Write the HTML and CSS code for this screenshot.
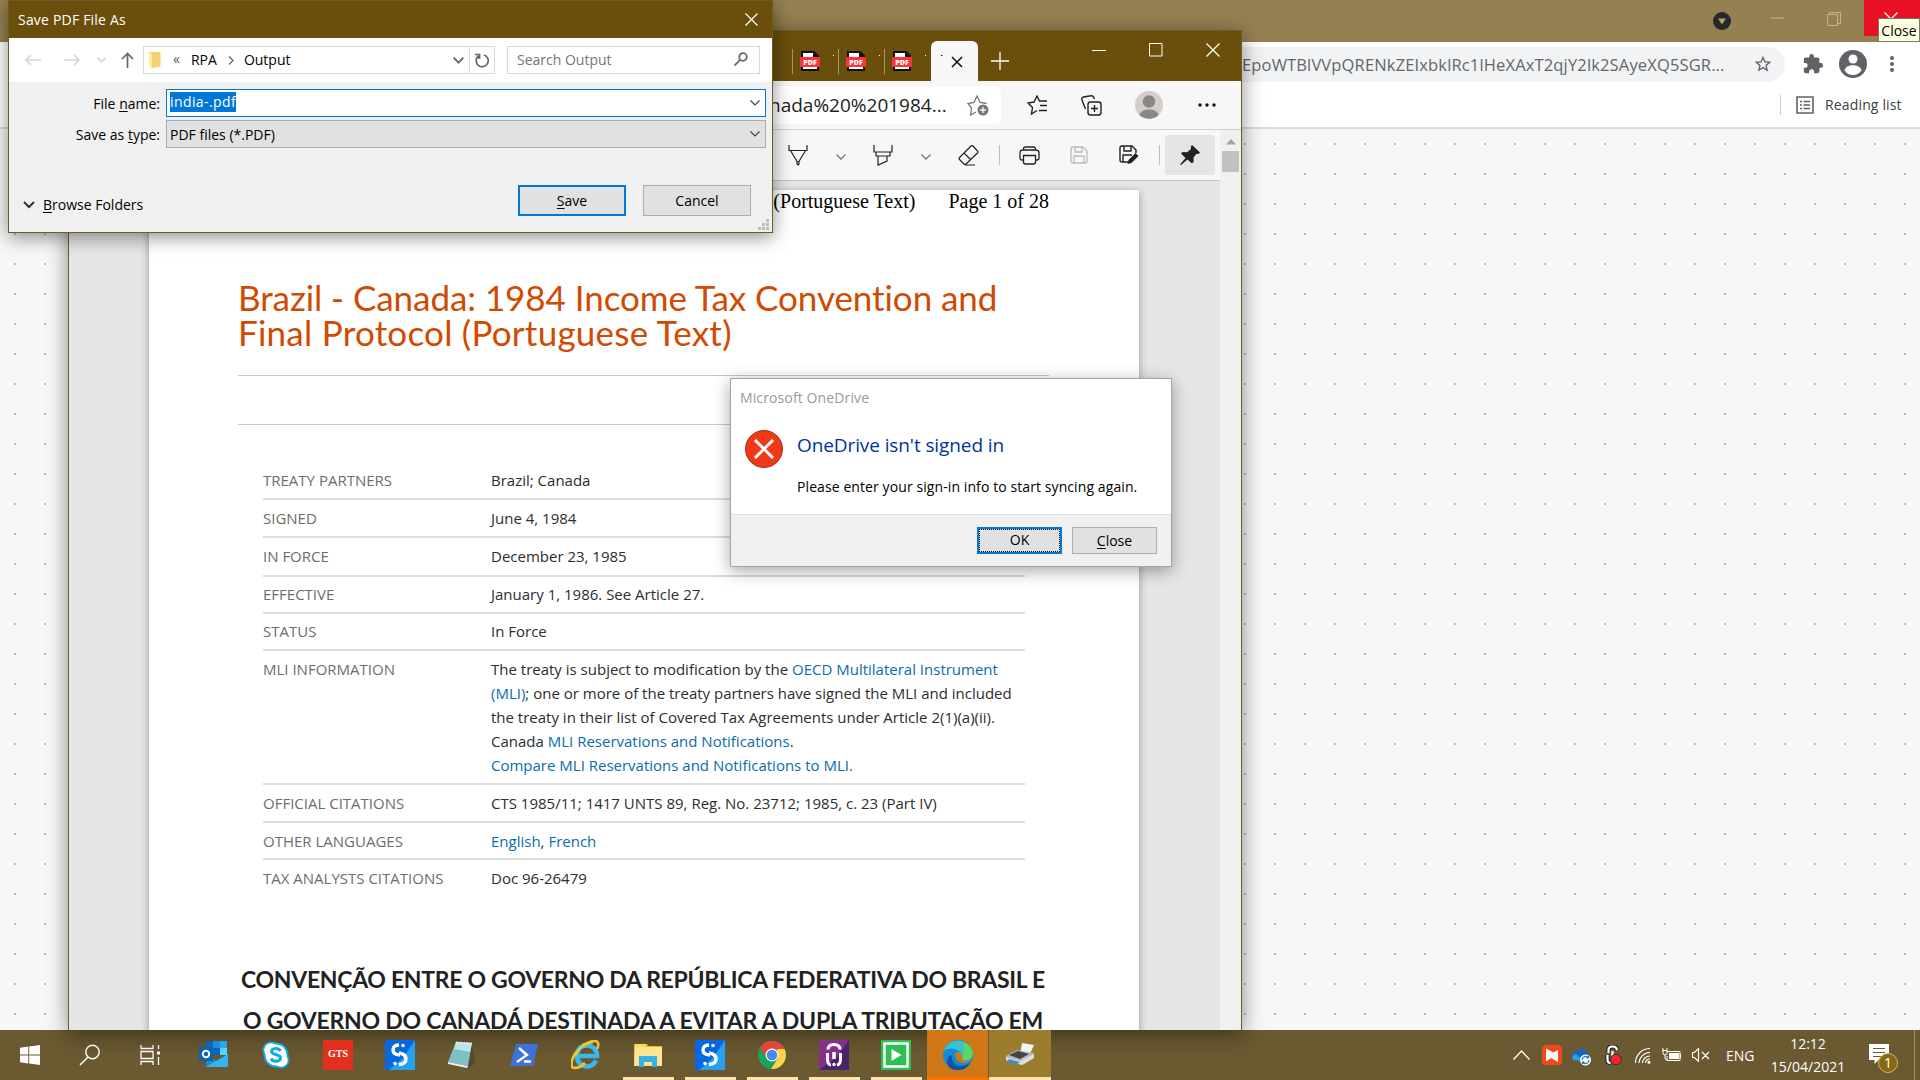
FILE: index.html
```html
<!DOCTYPE html>
<html lang="en">
<head>
<meta charset="utf-8">
<title>Desktop</title>
<link rel="stylesheet" href="styles.css">
</head>
<body>
<div class="desktop">

<section class="chrome">
  <div class="chrome-title">
    <svg class="chrome-drop" width="18" height="18" viewBox="0 0 18 18"><circle cx="9" cy="9" r="9" fill="#26272a"/><path d="M5 6.500h8L9 12.500z" fill="#b39d6b"/></svg>
    <svg class="chrome-min" width="13" height="2"><path d="M0 1h13" stroke="#c2b38f"/></svg>
    <svg class="chrome-max" width="14" height="14" viewBox="0 0 14 14" fill="none" stroke="#c2b38f"><path d="M.5 2.500h10v11H.5zM2.500 2.500v-2h11v11h-3"/></svg>
    <div class="chrome-close"><svg width="14" height="14" viewBox="0 0 14 14" stroke="#fff" stroke-width="1.200"><path d="M.5.5l13 13M13.500.5l-13 13"/></svg></div>
  </div>
  <div class="chrome-bar">
    <div class="omni"><span class="omni-text">EpoWTBlVVpQRENkZEIxbklRc1lHeXAxT2qjY2lk2SAyeXQ5SGR...</span>
      <svg width="20" height="20" viewBox="0 0 24 24" fill="#5f6368"><path d="M22 9.240l-7.190-.62L12 2 9.190 8.630 2 9.240l5.460 4.730L5.820 21 12 17.270 18.180 21l-1.630-7.030L22 9.240zM12 15.400l-3.760 2.270 1-4.280-3.320-2.880 4.380-.38L12 6.100l1.710 4.040 4.380.38-3.320 2.880 1 4.280L12 15.400z"/></svg>
    </div>
    <svg class="ext" width="22" height="22" viewBox="0 0 24 24" fill="#5f6368"><path d="M20.500 11H19V7c0-1.100-.9-2-2-2h-4V3.500a2.500 2.500 0 0 0-5 0V5H4c-1.100 0-2 .9-2 2v3.800h1.500a2.700 2.700 0 0 1 0 5.400H2V20c0 1.100.9 2 2 2h3.800v-1.500a2.700 2.700 0 0 1 5.400 0V22H17c1.100 0 2-.9 2-2v-4h1.500a2.500 2.500 0 0 0 0-5z"/></svg>
    <svg class="person" width="28" height="28" viewBox="0 0 28 28"><circle cx="14" cy="14" r="14" fill="#5f6368"/><circle cx="14" cy="9" r="4.500" fill="#fff"/><path d="M5.500 20.500c1-7 16-7 17 0-4.500 6-12.500 6-17 0z" fill="#fff"/></svg>
    <svg class="kebab" width="6" height="18" viewBox="0 0 6 18" fill="#5f6368"><circle cx="3" cy="3" r="2"/><circle cx="3" cy="9" r="2"/><circle cx="3" cy="15" r="2"/></svg>
  </div>
  <div class="chrome-marks">
    <span class="vline"></span>
    <svg width="18" height="18" viewBox="0 0 18 18" fill="none" stroke="#5f6368" stroke-width="1.600"><path d="M1 1h16v16H1zM4 5.500h2M4 9h2M4 12.500h2M7.500 5.500H14M7.500 9H14M7.500 12.500H14"/></svg>
    <span class="reading">Reading list</span>
  </div>
  <div class="dots"></div>
</section>

<section class="edge">
  <header class="edge-title">
    <div class="tab"><i></i><svg width="20" height="20" viewBox="0 0 20 20"><path d="M2 1h12l4 4v14H2z" fill="#fff" stroke="#111" stroke-width="2"/><path d="M13 1v5h5" fill="#111"/><rect y="6" width="20" height="10" rx="1" fill="#f7373b"/><text x="10" y="13.600" class="pdf">PDF</text></svg></div>
    <div class="tab"><i></i><svg width="20" height="20" viewBox="0 0 20 20"><path d="M2 1h12l4 4v14H2z" fill="#fff" stroke="#111" stroke-width="2"/><path d="M13 1v5h5" fill="#111"/><rect y="6" width="20" height="10" rx="1" fill="#f7373b"/><text x="10" y="13.600" class="pdf">PDF</text></svg></div>
    <div class="tab"><i></i><svg width="20" height="20" viewBox="0 0 20 20"><path d="M2 1h12l4 4v14H2z" fill="#fff" stroke="#111" stroke-width="2"/><path d="M13 1v5h5" fill="#111"/><rect y="6" width="20" height="10" rx="1" fill="#f7373b"/><text x="10" y="13.600" class="pdf">PDF</text></svg></div>
    <div class="tab-active"><svg width="22" height="14" viewBox="0 0 22 14" stroke="#111" stroke-width="1.500"><path d="M11 3l10 10M21 3L11 13"/><path d="M0 1.500h1.500" stroke-width="1"/></svg></div>
    <svg class="plus" width="18" height="18" viewBox="0 0 18 18" stroke="#fff" stroke-width="1.300"><path d="M9 0v18M0 9h18"/></svg>
    <svg class="wmin" width="14" height="14" viewBox="0 0 14 14" stroke="#fff"><path d="M0 7.500h14"/></svg>
    <svg class="wmax" width="14" height="14" viewBox="0 0 14 14" stroke="#fff" fill="none"><path d="M.5.500h12.500v12.500H.5z"/></svg>
    <svg class="wclose" width="14" height="14" viewBox="0 0 14 14" stroke="#fff" stroke-width="1.200"><path d="M.5.500l13 13M13.500.500l-13 13"/></svg>
  </header>
  <div class="edge-addr">
    <div class="url"><span>nada%20%201984...</span>
      <svg width="22" height="21" viewBox="0 0 22 21" fill="none" stroke="#777" stroke-width="1.300"><path d="M9 17l-5.500 3 1-7L1 8.500l6-1L10 1l3 6.500 6.500 1"/><circle cx="16" cy="15" r="5.500" fill="#777" stroke="none"/><path d="M16 12v6M13 15h6" stroke="#fff"/></svg>
    </div>
    <svg class="fav" width="21" height="20" viewBox="0 0 21 20" fill="none" stroke="#222" stroke-width="1.400"><path d="M10 15.500L4.500 19l1-6.500L1 8l6-1 3-6 2.500 5H20M13 10.500h7M12 15.500h8"/></svg>
    <svg class="coll" width="21" height="21" viewBox="0 0 21 21" fill="none" stroke="#222" stroke-width="1.400"><rect x="7" y="7" width="13" height="13" rx="2.500"/><path d="M13.500 10v7M10 13.500h7M4.500 14L1 5c-.5-1.500 0-2.500 1.500-3L10 .8c1.500-.3 2.500.5 3 2l.3 1.200"/></svg>
    <svg class="face" width="28" height="28" viewBox="0 0 28 28"><circle cx="14" cy="14" r="14" fill="#d3d0cc"/><circle cx="14" cy="10.500" r="6.200" fill="#8b8783"/><path d="M4.500 24c1-7.500 18-7.500 19 0a14 14 0 0 1-19 0z" fill="#8b8783"/></svg>
    <svg class="more" width="18" height="4" viewBox="0 0 18 4" fill="#111"><circle cx="2" cy="2" r="1.700"/><circle cx="9" cy="2" r="1.700"/><circle cx="16" cy="2" r="1.700"/></svg>
  </div>
  <div class="edge-body">
    <div class="viewer">
      <div class="pdfbar">
        <svg class="i-pen" width="20" height="21" viewBox="0 0 20 21" fill="none" stroke="#222" stroke-width="1.200"><path d="M1 0v5.500h18V0M2.500 5.500l6.500 11h2l6.500-11M9 16v3l1 1 1-1v-3"/></svg>
        <svg class="i-c1" width="10" height="6" viewBox="0 0 10 6" fill="none" stroke="#777" stroke-width="1.300"><path d="M.5.500L5 5 9.500.500"/></svg>
        <svg class="i-hl" width="20" height="21" viewBox="0 0 20 21" fill="none" stroke="#222" stroke-width="1.200"><path d="M1 0v7h18V0M3 7v4h14V7M5 11v9l9-4v-5"/></svg>
        <svg class="i-c2" width="10" height="6" viewBox="0 0 10 6" fill="none" stroke="#777" stroke-width="1.300"><path d="M.5.500L5 5 9.500.500"/></svg>
        <svg class="i-er" width="21" height="21" viewBox="0 0 21 21" fill="none" stroke="#222" stroke-width="1.200"><path d="M13 1L1.500 12.500q-1 1 0 2L6 19q1 1 2 0L19.500 8q1-1 0-2L15 1q-1-1-2 0zM6 8l7 7M7 20h10"/></svg>
        <i class="sep s1"></i>
        <svg class="i-pr" width="21" height="19" viewBox="0 0 21 19" fill="none" stroke="#222" stroke-width="1.300"><path d="M4.500 4V3q0-2 2-2h8q2 0 2 2v1M4.500 14H3q-2 0-2-2V7q0-3 3-3h13q3 0 3 3v5q0 2-2 2h-1.500M4.500 9.500h12V16q0 2-2 2h-8q-2 0-2-2z"/></svg>
        <svg class="i-sv" width="18" height="18" viewBox="0 0 18 18" fill="none" stroke="#bbb" stroke-width="1.300"><path d="M3 1h10l4 4v10q0 2-2 2H3q-2 0-2-2V3q0-2 2-2zM5 1v5h7V1M4 17v-7h10v7"/></svg>
        <svg class="i-sa" width="20" height="20" viewBox="0 0 20 20" fill="none" stroke="#222" stroke-width="1.400"><path d="M9 17H3q-2 0-2-2V3q0-2 2-2h10l4 4v3M5 1v5h7V1M4 17v-7h9"/><path d="M8.500 19l1-4 7-7 3 3-7 7z" fill="#222" stroke="none"/></svg>
        <i class="sep s2"></i>
        <div class="pin"><svg width="20" height="20" viewBox="0 0 20 20" fill="#222"><path d="M12 0l8 7.500-1.500 1.500-2-.2-3 3.700.2 4-1.700 2-4.500-4L1 20l-1-.5 5.500-6.500L1 8.500 2.500 7l4.500.2L11 4l-.2-2.500z"/></svg></div>
      </div>
      <div class="canvas">
        <article class="page">
          <div class="page-head"><span>(Portuguese Text)</span><span>Page 1 of 28</span></div>
          <h1><span class="h1a">Brazil - Canada: 1984 Income Tax Convention and</span><br><span class="h1b">Final Protocol (Portuguese Text)</span></h1>
          <div class="band"></div>
          <dl class="facts">
            <div><dt>TREATY PARTNERS</dt><dd>Brazil; Canada</dd></div>
            <div><dt>SIGNED</dt><dd>June 4, 1984</dd></div>
            <div class="tall"><dt>IN FORCE</dt><dd>December 23, 1985</dd></div>
            <div class="up"><dt>EFFECTIVE</dt><dd>January 1, 1986. See Article 27.</dd></div>
            <div class="up"><dt>STATUS</dt><dd>In Force</dd></div>
            <div><dt>MLI INFORMATION</dt><dd>The treaty is subject to modification by the <a>OECD Multilateral Instrument</a><br><a>(MLI)</a>; one or more of the treaty partners have signed the MLI and included<br>the treaty in their list of Covered Tax Agreements under Article 2(1)(a)(ii).<br>Canada <a>MLI Reservations and Notifications</a>.<br><a>Compare MLI Reservations and Notifications to MLI.</a></dd></div>
            <div><dt>OFFICIAL CITATIONS</dt><dd>CTS 1985/11; 1417 UNTS 89, Reg. No. 23712; 1985, c. 23 (Part IV)</dd></div>
            <div class="short"><dt>OTHER LANGUAGES</dt><dd><a>English</a>, <a>French</a></dd></div>
            <div><dt>TAX ANALYSTS CITATIONS</dt><dd>Doc 96-26479</dd></div>
          </dl>
          <h2><span class="h2a">CONVENÇÃO ENTRE O GOVERNO DA REPÚBLICA FEDERATIVA DO BRASIL E</span><br><span class="h2b">O GOVERNO DO CANADÁ DESTINADA A EVITAR A DUPLA TRIBUTAÇÃO EM</span></h2>
        </article>
      </div>
    </div>
    <div class="scroll"><svg width="10" height="6" viewBox="0 0 10 6"><path d="M0 5.500L5 0l5 5.500z" fill="#a3a3a3"/></svg><div class="thumb"></div></div>
  </div>
</section>

<section class="save">
  <header><span>Save PDF File As</span><svg width="13" height="13" viewBox="0 0 13 13" stroke="#fff" stroke-width="1.200"><path d="M.5.500l12 12M12.500.500l-12 12"/></svg></header>
  <div class="nav">
    <svg class="n-b" width="16" height="12" viewBox="0 0 16 12" fill="none" stroke="#d5d5d5" stroke-width="1.600"><path d="M16 6H1M6 1L1 6l5 5"/></svg>
    <svg class="n-f" width="16" height="12" viewBox="0 0 16 12" fill="none" stroke="#d5d5d5" stroke-width="1.600"><path d="M0 6h15M10 1l5 5-5 5"/></svg>
    <svg class="n-d" width="9" height="6" viewBox="0 0 9 6" fill="none" stroke="#d5d5d5" stroke-width="1.600"><path d="M.5.500l4 4.500 4-4.500"/></svg>
    <svg class="n-u" width="13" height="16" viewBox="0 0 13 16" fill="none" stroke="#666" stroke-width="1.700"><path d="M6.500 16V1.500M1 7l5.500-5.500L12 7"/></svg>
    <div class="crumbs">
      <svg class="fold" width="12" height="18" viewBox="0 0 12 18"><path d="M0 1h11.500v14.500L4 17 0 15z" fill="#f6d173"/><path d="M0 1l3 2v15l-3-2z" fill="#ffe9a8"/></svg>
      <span class="c1">«</span><span class="c2">RPA</span>
      <svg width="6" height="9" viewBox="0 0 6 9" fill="none" stroke="#666" stroke-width="1.300"><path d="M1 .5l4 4-4 4"/></svg>
      <span class="c3">Output</span>
      <svg class="cdown" width="11" height="7" viewBox="0 0 11 7" fill="none" stroke="#666" stroke-width="1.800"><path d="M.7.700l4.800 5 4.800-5"/></svg>
      <div class="refresh"><svg width="14" height="15" viewBox="0 0 14 15" fill="none" stroke="#666" stroke-width="1.700"><path d="M9 2A6 6 0 1 1 3.500 3M0 1.500h4.500V6"/></svg></div>
    </div>
    <div class="search"><span>Search Output</span><svg width="14" height="14" viewBox="0 0 14 14" fill="none" stroke="#666" stroke-width="1.800"><circle cx="9" cy="5" r="3.800"/><path d="M6.300 7.700L.5 13.500"/></svg></div>
  </div>
  <div class="form">
    <label>File <u>n</u>ame:</label>
    <div class="input"><span>india-.pdf</span><svg width="10" height="6" viewBox="0 0 10 6" fill="none" stroke="#444" stroke-width="1.200"><path d="M.5.500L5 5 9.500.500"/></svg></div>
    <label class="lt">Save as <u>t</u>ype:</label>
    <div class="select"><span>PDF files (*.PDF)</span><svg width="10" height="6" viewBox="0 0 10 6" fill="none" stroke="#444" stroke-width="1.200"><path d="M.5.500L5 5 9.500.500"/></svg></div>
  </div>
  <footer>
    <svg class="bdown" width="12" height="8" viewBox="0 0 12 8" fill="none" stroke="#333" stroke-width="2"><path d="M1 1l5 5 5-5"/></svg>
    <span class="browse"><u>B</u>rowse Folders</span>
    <div class="btn primary"><span><u>S</u>ave</span></div>
    <div class="btn">Cancel</div>
  </footer>
  <svg class="grip" width="11" height="11" viewBox="0 0 11 11" fill="#bdbdbd"><path d="M8 0h3v3H8zM8 4h3v3H8zM4 4h3v3H4zM0 8h3v3H0zM4 8h3v3H4zM8 8h3v3H8z"/></svg>
</section>

<section class="onedrive">
  <div class="od-title">Microsoft OneDrive</div>
  <div class="od-main">
    <svg width="38" height="38" viewBox="0 0 38 38"><circle cx="19" cy="19" r="18.500" fill="#f03a17" stroke="#a82a16"/><path d="M10 10l18 18M28 10L10 28" stroke="#fff" stroke-width="3"/></svg>
    <div class="od-text"><div class="od-h">OneDrive isn't signed in</div><div class="od-p">Please enter your sign-in info to start syncing again.</div></div>
  </div>
  <div class="od-foot"><div class="btn ok"><span>OK</span></div><div class="btn cl"><span><u>C</u>lose</span></div></div>
</section>

<div class="tooltip">Close</div>

<nav class="taskbar">
  <div class="sys"><svg width="20" height="20" viewBox="0 0 20 20" fill="#fff"><path d="M0 2.800l8.300-1.200v8H0zM9.200 1.400L20 0v9.600H9.200zM0 10.500h8.300v8L0 17.300zM9.200 10.500H20V20L9.200 18.600z"/></svg></div>
  <div class="sys"><svg width="22" height="22" viewBox="0 0 22 22" fill="none" stroke="#fff" stroke-width="1.400"><circle cx="13.500" cy="8" r="6.700"/><path d="M9 13l-8 8"/></svg></div>
  <div class="sys"><svg width="20" height="20" viewBox="0 0 20 20" fill="none" stroke="#fff" stroke-width="1.300"><path d="M1 0v3.500h12V0M1 20v-3.500h12V20M1 6.500h12v7H1zM18.500 0v4M18.500 12v8"/><path d="M17 6.500h3v3h-3z" fill="#fff" stroke="none"/></svg></div>
  <div class="apps">
    <div class="app"><svg width="30" height="30" viewBox="0 0 30 30"><path d="M7 1h21v14H7z" fill="#0f65b5"/><path d="M14 1h7v7h-7z" fill="#1490df"/><path d="M21 1h7v7h-7z" fill="#28a8ea"/><path d="M21 8h7v7h-7z" fill="#50d9ff"/><path d="M7 27V15l11 6 11-7v12l-1 1z" fill="#1b8ad8"/><path d="M7 27l22-13v12l-1 1z" fill="#35b4f2"/><rect y="7" width="14" height="14" rx="1" fill="#0c61b5"/><circle cx="7" cy="14" r="3.200" fill="none" stroke="#fff" stroke-width="2"/></svg></div>
    <div class="app"><svg width="28" height="28" viewBox="0 0 28 28"><circle cx="9" cy="9" r="8.500" fill="#13a9e9"/><circle cx="19" cy="19" r="8.500" fill="#13a9e9"/><circle cx="14" cy="14" r="12.500" fill="#13a9e9"/><circle cx="9" cy="9" r="6.800" fill="#fff"/><circle cx="19" cy="19" r="6.800" fill="#fff"/><circle cx="14" cy="14" r="10.500" fill="#fff"/><path d="M18.500 10q-2-3-5-2.500Q9.500 8 9.500 10.500c0 3.500 9 2.500 9 6.500 0 3.800-7.500 4.500-9.500.5" fill="none" stroke="#13a9e9" stroke-width="3"/></svg></div>
    <div class="app"><div class="gts">GTS</div></div>
    <div class="app"><svg width="30" height="30" viewBox="0 0 30 30"><path d="M0 0h30v30H0z" fill="#0667e0"/><path d="M30 0v30H4l14-12z" fill="#24a1ef"/><path d="M14 5q-6 0-6 5 0 4.500 7 5" fill="none" stroke="#fff" stroke-width="3.400"/><path d="M14 13q7 1 7 6 0 5-7 5.500" fill="none" stroke="#fff" stroke-width="3.400"/><circle cx="18" cy="5.500" r="1.800" fill="#fff"/><circle cx="10" cy="23.500" r="1.800" fill="#fff"/></svg></div>
    <div class="app"><svg width="30" height="30" viewBox="0 0 30 30"><path d="M25 3l3 20-4 4-3-1z" fill="#57492d"/><path d="M9 2l16 1-4 23L1 22z" fill="#7fbfc6"/><path d="M9 2l16 1-2 9-16-3z" fill="#bce5e7"/><path d="M1 22l20 4-1 2-19-4z" fill="#e9eeee"/><path d="M9 2.500l16 1" stroke="#e8e8e8" stroke-width="2" stroke-dasharray="1.500 1"/></svg></div>
    <div class="app"><svg width="28" height="22" viewBox="0 0 28 22"><path d="M6 0h22l-5 22H0z" fill="#3f72d9"/><path d="M9 4l8 7-10 7M14 17.500h7" fill="none" stroke="#fff" stroke-width="2.400"/></svg></div>
    <div class="app"><svg width="30" height="30" viewBox="0 0 30 30" fill="none"><path d="M25 20.500q-3 6-9 6A10 10 0 0 1 6 16C6 9 10 5.500 16 5.500S26 10 26 16H8" stroke="#39b9ee" stroke-width="4.600"/><path d="M12 5Q25-2 27 3q1 2-1 6M5 12C-1 22-1 28 4 28q5 0 10-5" stroke="#f2c52c" stroke-width="2.600"/><path d="M4 16Q9 4 22 2" stroke="#f2c52c" stroke-width="2.500"/></svg></div>
    <div class="app open"><svg width="28" height="24" viewBox="0 0 28 24"><path d="M0 1h13l1 2h14v20H0z" fill="#e8b52d"/><path d="M1 4h27v19H0z" fill="#ffe591"/><path d="M1 1h11v3H1z" fill="#ffd84c"/><path d="M5 24V13h18v11h-5v-5h-8v5z" fill="#36b0e6"/></svg></div>
    <div class="app open"><svg width="30" height="30" viewBox="0 0 30 30"><path d="M0 0h30v30H0z" fill="#0667e0"/><path d="M30 0v30H4l14-12z" fill="#24a1ef"/><path d="M14 5q-6 0-6 5 0 4.500 7 5" fill="none" stroke="#fff" stroke-width="3.400"/><path d="M14 13q7 1 7 6 0 5-7 5.500" fill="none" stroke="#fff" stroke-width="3.400"/><circle cx="18" cy="5.500" r="1.800" fill="#fff"/><circle cx="10" cy="23.500" r="1.800" fill="#fff"/></svg></div>
    <div class="app open"><svg width="28" height="28" viewBox="0 0 28 28"><circle cx="14" cy="14" r="14" fill="#19a45b"/><path d="M14 0a14 14 0 0 1 12.600 8H14L8 16 1.900 7A14 14 0 0 1 14 0z" fill="#e2473a"/><path d="M26.600 8A14 14 0 0 1 13 28l7-11-1-9z" fill="#fdd247"/><circle cx="14" cy="14" r="6.500" fill="#fff"/><circle cx="14" cy="14" r="5.300" fill="#4a86ee"/></svg></div>
    <div class="app open"><svg width="30" height="30" viewBox="0 0 30 30"><path d="M0 0h30v30H0z" fill="#84318c"/><path d="M30 0v30H0l18-13z" fill="#4a2469"/><path d="M9 9.500q0-5 6-5t6 5M8.500 13v6.500q0 5 3.500 5.500M21.500 13v6.500q0 5-3.500 5.500" fill="none" stroke="#fff" stroke-width="3"/><path d="M15 12v7" stroke="#fff" stroke-width="3.500"/><circle cx="15" cy="24.500" r="1.700" fill="#fff"/></svg></div>
    <div class="app open"><svg width="30" height="30" viewBox="0 0 30 30"><path d="M0 0h30v30H0z" fill="#2fbf55"/><path d="M3.500 3.500h23v23h-23z" fill="none" stroke="#fff" stroke-width="2.400"/><path d="M10.500 9l10 6-10 6z" fill="#fff"/></svg></div>
    <div class="app open alert"><svg width="30" height="30" viewBox="0 0 30 30"><circle cx="15" cy="15" r="15" fill="#1688d8"/><path d="M1 11C4-2 24-4 29 11c3 9-7 12-10 8 2-8-10-14-18-8z" fill="#36c3cf"/><path d="M20 2c8 3 12 10 9 15-2 4-8 4-10 2 2-6 2-12 1-17z" fill="#5ad56a"/><path d="M9 15c-2 8 7 15 18 8-4 8-14 9-20 5-5-5-3-12 2-13z" fill="#0d55a4"/><path d="M12 15c0-4 7-4 7 1-1 4 3 6 9 4-6 6-16 2-16-5z" fill="#d17818"/></svg></div>
    <div class="app open current"><svg width="30" height="24" viewBox="0 0 30 24"><path d="M17 0l12 2-5 11-9-2z" fill="#f4f4f4"/><path d="M1 13l11-6 17 3v5l-12 7L1 17z" fill="#b7b7b7"/><path d="M4 12l9-4 11 3-9 5z" fill="#444"/><path d="M1 14l14 4 14-7v4l-12 7L1 17z" fill="#dedede"/><path d="M4 16l11 3-4 3-9-3z" fill="#3e91bd"/></svg></div>
  </div>
  <div class="tray">
    <svg class="t1" width="17" height="10" viewBox="0 0 17 10" fill="none" stroke="#fff" stroke-width="1.300"><path d="M.5 9.500l8-8.500 8 8.500"/></svg>
    <svg class="t2" width="20" height="20" viewBox="0 0 20 20"><rect width="20" height="20" rx="4" fill="#f2491a"/><path d="M4 3.500l7.500 4L16 5v12l-7-4-5 3.500z" fill="#fff"/></svg>
    <svg class="t3" width="21" height="18" viewBox="0 0 21 18"><path d="M2 12a4 4 0 0 1 2-7 7 7 0 0 1 13 1v6z" fill="#1269c4"/><path d="M2 12a4 4 0 0 1 3-6l8 7z" fill="#2aa1e8"/><circle cx="14.500" cy="12" r="5.500" fill="#fff"/><path d="M11 12a3.500 3.500 0 0 1 6-2.500M18 12a3.500 3.500 0 0 1-6 2.500M17.500 8v2h-2M11.500 16v-2h2" fill="none" stroke="#1874bd" stroke-width="1.200"/></svg>
    <svg class="t4" width="17" height="20" viewBox="0 0 17 20"><path d="M3.500 8V5q0-3.500 4-3.500T12 5M2.500 10v5q0 3 3 3" fill="none" stroke="#292929" stroke-width="4.500"/><path d="M3.500 8V5q0-3.500 4-3.500T12 5M2.500 10v5q0 3 3 3M7.500 6v5" fill="none" stroke="#fff" stroke-width="2.200"/><circle cx="11" cy="14.500" r="5.300" fill="#f8232b" stroke="#333"/></svg>
    <svg class="t5" width="16" height="16" viewBox="0 0 16 16" fill="none" stroke="#fff" stroke-width="1.100"><path d="M.5 15A14.500 14.500 0 0 1 15 .5M4 15A11 11 0 0 1 15 4.500M7.500 15A7.500 7.500 0 0 1 15 8M10.500 15a4.500 4.500 0 0 1 4.500-4"/><circle cx="14" cy="14.300" r="1" fill="#fff"/></svg>
    <svg class="t6" width="20" height="15" viewBox="0 0 20 15" fill="none" stroke="#fff"><path d="M5 3.500h13v9H5V8M18.500 6v4M0 2.500h5M1 0v5q0 2 2 2t2-2V0M3 7v3q0 2 2 2"/><path d="M7 5h10v6H7z" fill="#fff" stroke="none"/></svg>
    <svg class="t7" width="18" height="14" viewBox="0 0 18 14" fill="none" stroke="#fff" stroke-width="1.200"><path d="M.5 4.500h2L6.500.5v13l-4-4h-2zM10 4l7 7M17 4l-7 7"/></svg>
    <span class="lang">ENG</span>
    <div class="clock"><span class="time">12:12</span><span>15/04/2021</span></div>
    <div class="note"><svg width="20" height="20" viewBox="0 0 20 20"><path d="M0 0h20v16H9.500l-4 4v-4H0z" fill="#fff"/><path d="M4 4.500h12M4 8.500h12M4 12.500h8" stroke="#6a5931" stroke-width="1.200"/></svg><b>1</b></div>
    <i class="show"></i>
  </div>
</nav>
</div>
</body>
</html>
```
FILE: styles.css
```css
* { box-sizing: border-box; }
body { margin: 0; background: #f7f7f7; font-family: "Open Sans", "Noto Sans", sans-serif; font-size: 14px; color: #000; }
svg { display: block; flex: none; }
.desktop { position: relative; width: 1920px; height: 1080px; overflow: hidden; white-space: nowrap; }

/* background browser */
.chrome { height: 1030px; display: flex; flex-direction: column; }
.chrome-title { height: 42px; background: #958051; display: flex; align-items: flex-start; justify-content: flex-end; }
.chrome-drop { margin: 12px 40px 0 0; }
.chrome-min { margin: 17px 43px 0 0; }
.chrome-max { margin: 12px 23px 0 0; }
.chrome-close { width: 56px; height: 36px; background: #e81123; display: flex; justify-content: center; padding: 12px 2px 0 0; }
.chrome-bar { height: 44px; background: #fff; display: flex; align-items: center; }
.omni { height: 35px; width: 1737px; margin: 0 0 0 48px; background: #f1f3f4; border-radius: 18px; display: flex; align-items: center; justify-content: flex-end; padding-right: 12px; color: #63676b; flex: none; }
.omni-text { width: 484px; margin-right: 27px; font-size: 16.500px; letter-spacing: 0.150px; }
.ext { margin-left: 17px; }
.person { margin: 0 22px 0 15px; }
.chrome-marks { height: 43px; background: #fff; border-bottom: 2px solid #dadce0; display: flex; align-items: center; justify-content: flex-end; padding: 0 18px 4px 0; }
.vline { width: 1px; height: 20px; background: #ccc; margin-right: 15px; }
.reading { margin-left: 11px; color: #3c4043; width: 77px; letter-spacing: 0.150px; }
.dots { flex: 1; background: #f7f7f7 radial-gradient(circle at 15px 15px, #bbb 1px, transparent 1.300px) 0 0 / 30px 30px; }
.tooltip { position: absolute; left: 1878px; top: 18px; width: 42px; height: 24px; background: #ffffe1; border: 1px solid #767676; line-height: 23px; text-align: center; }

/* document browser */
.edge { position: absolute; left: 68px; top: 30px; width: 1174px; height: 1000px; border: 1px solid #735a20; border-bottom: 0; background: #f7f7f7; display: flex; flex-direction: column; box-shadow: 0 4px 20px rgba(0,0,0,.45); }
.edge-title { height: 50px; background: #6a4e0c; display: flex; align-items: center; padding-left: 723px; }
.tab { width: 46px; display: flex; align-items: center; gap: 7px; padding-top: 10px; }
.tab i { width: 1px; height: 25px; background: #a4956d; }
.tab::after { content: ""; width: 1px; height: 1px; background: #fff; margin: -12px 0 0 6px; }
.pdf { font: 800 7px "Open Sans", sans-serif; fill: #fff; text-anchor: middle; }
.tab-active { width: 47px; height: 40px; align-self: flex-end; margin-left: 1px; background: #f7f7f7; border-radius: 6px 6px 0 0; display: flex; align-items: center; padding: 0 0 1px 10px; }
.plus { margin: 10px 83px 0 13px; }
.wmin { margin-right: 43px; margin-bottom: 13px; }
.wmax { margin-right: 43px; margin-bottom: 13px; }
.wclose { margin-bottom: 13px; }
.edge-addr { height: 49px; border-bottom: 1px solid #cfcfcf; display: flex; align-items: center; }
.url { width: 932px; height: 38px; border-radius: 6px; background: #fff; display: flex; align-items: center; justify-content: flex-end; padding-right: 12px; font-size: 19px; color: #222; box-shadow: 0 0 2px #eee; }
.url span { width: 176px; margin-right: 22px; }
.fav { margin-left: 26px; }
.coll { margin-left: 33px; }
.face { margin-left: 33px; }
.more { margin-left: 35px; }
.edge-body { flex: 1; display: flex; min-height: 0; }
.viewer { flex: 1; display: flex; flex-direction: column; min-width: 0; }
.pdfbar { height: 51px; border-bottom: 1px solid #c3c3c3; display: flex; align-items: center; padding-left: 719px; }
.i-c1 { margin: 3px 27px 0 28px; }
.i-hl { margin-right: 28px; }
.i-c2 { margin: 3px 27px 0 0; }
.sep { width: 1px; height: 20px; background: #bbb; }
.s1 { margin: 0 19px 0 20px; }
.i-sv { margin: 0 31px 0 30px; }
.s2 { margin: 0 5px 0 20px; }
.pin { width: 50px; height: 40px; background: #e4e4e4; border-radius: 3px; display: flex; align-items: center; justify-content: center; }
.canvas { flex: 1; background: #e6e6e6; padding: 9px 0 0 80px; overflow: hidden; min-height: 0; }
.page { width: 990px; height: 860px; background: #fff; box-shadow: 0 2px 8px rgba(0,0,0,.35); padding: 0 90px; overflow: hidden; }
.page-head { height: 84px; display: flex; justify-content: flex-end; gap: 33px; font: 20px/22px "Liberation Serif", serif; }
h1 { margin: 0 0 0 -1px; height: 101px; padding-top: 6px; font: 400 35px/35px Lato, sans-serif; color: #d04a02; }
.h1a { letter-spacing: -0.060px; }
.h1b { letter-spacing: 0.240px; }
.band { height: 50px; width: 811px; margin-left: -1px; border-top: 1px solid #c8c8c8; border-bottom: 1px solid #c8c8c8; }
.facts { margin: 37px 24px 0; color: #2d2d2d; line-height: 24px; font-size: 15px; }
.facts div { display: grid; grid-template-columns: 228px 1fr; padding: 6px 0; border-bottom: 2px solid #dcdcdc; }
.facts div.tall { padding-bottom: 7px; }
.facts div.up { padding: 5px 0 6px; }
.facts div.short { padding-bottom: 5px; }
.facts div:last-child { border-bottom: 0; }
dt { color: #6d6d6d; }
dd { margin: 0; }
a { color: #0b6cab; }
h2 { margin: 63px -9px 0 -11px; text-align: center; font: 700 23px/41px Lato, sans-serif; color: #222; }
.h2a { letter-spacing: -0.300px; }
.h2b { letter-spacing: -0.250px; }
.scroll { width: 21px; background: #f0f0f0; display: flex; flex-direction: column; align-items: center; padding-top: 9px; gap: 6px; }
.thumb { width: 17px; height: 21px; background: #c1c1c1; }

/* save dialog */
.save { position: absolute; left: 8px; top: 0; width: 765px; height: 233px; border: 1px solid #735a20; background: #f0f0f0; display: flex; flex-direction: column; box-shadow: 0 4px 18px rgba(0,0,0,.45); }
.save header { height: 37px; background: #6a4e0c; color: #fff; display: flex; align-items: center; justify-content: space-between; padding: 0 14px 0 9px; letter-spacing: 0.200px; }
.nav { height: 44px; background: #fff; display: flex; align-items: center; padding-left: 16px; }
.n-f { margin-left: 23px; }
.n-d { margin-left: 17px; }
.n-u { margin: 0 9px 0 15px; }
.crumbs { width: 352px; height: 28px; border: 1px solid #d9d9d9; display: flex; align-items: center; }
.fold { margin-left: 5px; }
.c1 { margin: 0 10px 3px 12px; color: #555; }
.c2 { margin: 0 11px 2px 1px; }
.c3 { margin: 0 auto 2px 10px; }
.cdown { margin-right: 5px; }
.refresh { width: 25px; height: 26px; border-left: 1px solid #d9d9d9; display: flex; align-items: center; justify-content: center; }
.search { width: 253px; height: 28px; margin-left: 12px; border: 1px solid #d9d9d9; display: flex; align-items: center; justify-content: space-between; padding: 0 11px 2px 9px; color: #757575; }
.form { padding: 7px 6px 0 0; display: grid; grid-template-columns: 151px 600px; column-gap: 6px; row-gap: 3px; align-items: center; }
.form label { text-align: right; }
.input, .select { height: 28px; border: 1px solid #adadad; background: #e1e1e1; display: flex; align-items: center; justify-content: space-between; padding: 0 5px 0 3px; }
.input { border-color: #0078d7; background: #fff; }
.input span { background: #0078d7; color: #fff; height: 20px; line-height: 20px; margin-bottom: 2px; letter-spacing: 0.400px; }
u { text-underline-offset: 2px; text-decoration-thickness: 1px; text-decoration-skip-ink: none; }
footer { display: flex; align-items: center; padding: 37px 21px 0 14px; }
.bdown { margin-top: 8px; }
.browse { margin: 8px auto 0 8px; }
.btn { width: 108px; height: 31px; border: 1px solid #adadad; background: #e1e1e1; display: flex; align-items: center; justify-content: center; margin-left: 17px; }
.btn.primary { border: 2px solid #0078d7; }
.grip { position: absolute; right: 3px; bottom: 2px; }

/* sign-in alert */
.onedrive { position: absolute; left: 730px; top: 378px; width: 442px; height: 189px; border: 1px solid #a3a3a3; background: #fff; display: flex; flex-direction: column; box-shadow: 0 4px 16px rgba(0,0,0,.35); }
.od-title { height: 38px; line-height: 37px; padding-left: 9px; color: #999; letter-spacing: 0.120px; }
.od-main { flex: 1; display: flex; gap: 14px; padding: 13px 0 0 14px; }
.od-h { font-size: 19px; line-height: 28px; color: #003399; margin-top: 1px; letter-spacing: -0.100px; }
.od-p { line-height: 20px; margin-top: 18px; letter-spacing: 0.090px; }
.od-foot { height: 52px; border-top: 1px solid #dfdfdf; background: #f0f0f0; display: flex; justify-content: flex-end; padding: 12px 14px 0 0; }
.od-foot .btn { width: 85px; height: 27px; margin-left: 10px; }
.od-foot .ok { border: 2px solid #0078d7; }
.ok span { width: 81px; height: 23px; border: 1px dotted #000; text-align: center; line-height: 20px; }

/* taskbar */
.taskbar { height: 50px; background: #6a5931; display: flex; color: #fff; }
.sys { width: 60px; display: flex; align-items: center; justify-content: center; }
.apps { display: flex; margin-left: 3px; }
.app { width: 62px; display: flex; align-items: center; justify-content: center; border-bottom: 3px solid transparent; padding-top: 3px; position: relative; }
.gts { width: 30px; height: 30px; background: #e1301e; font: 700 10px/28px "Liberation Serif", serif; text-align: center; }
.app.open::after { content: ""; position: absolute; left: 6px; bottom: -3px; width: 51px; height: 3px; background: #ffe4ae; }
.app.alert { background: #cf7717; border-bottom-color: #ff7200; border-right: 1px solid #6a5931; }
.app.alert::after { display: none; }
.app.current { background: #9b7c2d; }
.app.current::after { left: 0; width: 62px; }
.tray { display: flex; align-items: center; margin-left: auto; }
.t2 { margin-left: 12px; }
.t3 { margin: 3px 0 0 9px; }
.t4 { margin-left: 13px; }
.t5 { margin: 2px 0 0 13px; }
.t6 { margin-left: 11px; }
.t7 { margin-left: 10px; }
.lang { margin-left: 16px; width: 28px; }
.clock { width: 76px; margin-left: 16px; display: flex; flex-direction: column; align-items: center; line-height: 23px; }
.note { position: relative; margin: 0 0 2px 23px; }
.note b { position: absolute; left: 9px; top: 9px; width: 20px; height: 20px; border-radius: 50%; border: 1px solid #c9b37b; background: #8b6914; font: 14px/18px "Open Sans", sans-serif; text-align: center; }
.show { width: 1px; height: 50px; background: #9d9172; margin: 0 5px 0 25px; }
```
